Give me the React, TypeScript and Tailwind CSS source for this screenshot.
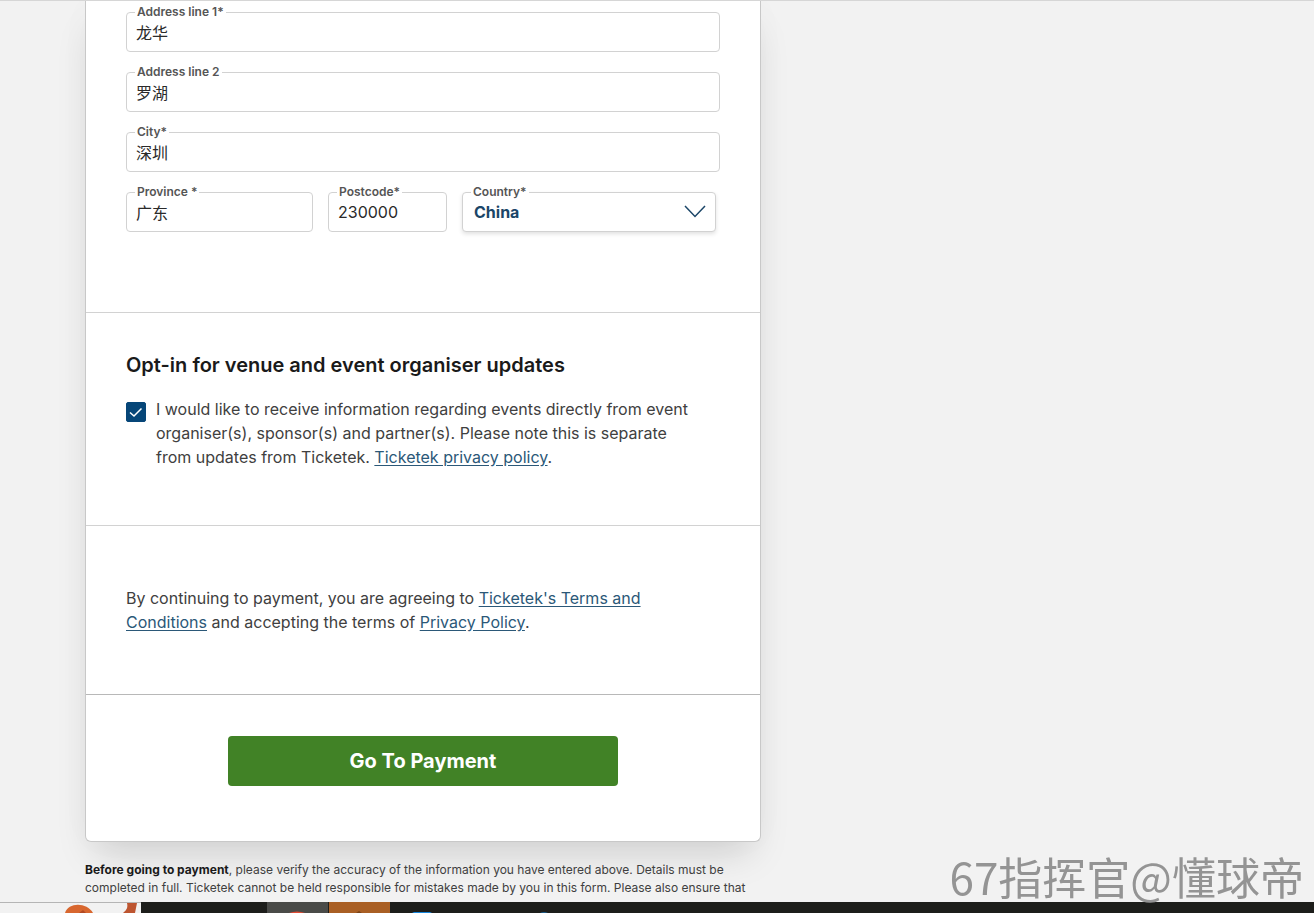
import { useState } from "react";

type FieldProps = {
  id: string;
  label: string;
  value: string;
  onChange: (value: string) => void;
};

const labelClass =
  "absolute -top-2 left-[9px] bg-white px-[2px] text-xs leading-4 font-semibold text-[#555555]";

const Field = ({ id, label, value, onChange }: FieldProps) => (
  <div className="relative">
    <label htmlFor={id} className={labelClass}>
      {label}
    </label>
    <input
      id={id}
      type="text"
      value={value}
      onChange={(e) => onChange(e.target.value)}
      className="block h-10 w-full rounded border border-[#d2d2d2] px-[9px] text-base text-[#2a2a2a] focus:outline-none"
    />
  </div>
);

const Taskbar = () => (
  <footer className="flex h-[11px] shrink-0 overflow-hidden bg-[#1d1e1b]">
    <div className="w-[141px] border-t border-[#b5b5b5] bg-[#f2f2f2]">
      <svg width="141" height="10" viewBox="0 0 141 10" aria-hidden="true">
        <path d="M65 10C68 -1 87 -1 93 10Z" fill="#d8672f" />
        <path d="M79 10l4-3 3 3Z" fill="#b34a22" />
        <path d="M127 0H137L135 10H123C127 7 128 4 127 0Z" fill="#bd5530" />
      </svg>
    </div>
    <div className="w-[126px]" />
    <div className="mr-px w-[61px] bg-[#4a4b48]">
      <svg width="61" height="11" viewBox="0 0 61 11" aria-hidden="true">
        <path d="M22 11Q30 8 38 11Z" fill="#e24b34" />
      </svg>
    </div>
    <div className="w-[61px] bg-[#a95f24]">
      <svg width="61" height="11" viewBox="0 0 61 11" aria-hidden="true">
        <path d="M27 11l3-2 3 2Z" fill="#7a4317" />
      </svg>
    </div>
    <svg width="170" height="11" viewBox="0 0 170 11" aria-hidden="true">
      <path d="M22 11l2-1H40l2 1Z" fill="#1686dc" />
      <path d="M150 11q4-2 8 0Z" fill="#1c5f8e" />
    </svg>
  </footer>
);

const App = () => {
  const [address1, setAddress1] = useState("龙华");
  const [address2, setAddress2] = useState("罗湖");
  const [city, setCity] = useState("深圳");
  const [province, setProvince] = useState("广东");
  const [postcode, setPostcode] = useState("230000");
  const [country, setCountry] = useState("China");
  const [optIn, setOptIn] = useState(true);

  const linkClass = "text-[#2b5878] underline underline-offset-2";

  return (
    <div className="flex h-screen flex-col bg-[#f2f2f2] font-['Inter','Noto_Sans_CJK_SC',sans-serif] text-[#404040]">
      <main className="min-h-0 flex-1 overflow-hidden border-t border-[#d6d6d6] pl-[85px]">
        <div className="max-w-[676px]">
          <form
            onSubmit={(e) => e.preventDefault()}
            className="rounded-b-md border border-t-0 border-[#c8c8c8] bg-white shadow-[0_20px_36px_-10px_rgba(0,0,0,0.15),0_0_40px_rgba(0,0,0,0.02)]"
          >
            <section className="flex flex-col gap-5 border-b border-[#d2d2d2] px-10 pt-[11px] pb-20">
              <Field id="address1" label="Address line 1*" value={address1} onChange={setAddress1} />
              <Field id="address2" label="Address line 2" value={address2} onChange={setAddress2} />
              <Field id="city" label="City*" value={city} onChange={setCity} />
              <div className="grid grid-cols-[187fr_119fr_254fr] gap-[15px] pr-1">
                <Field id="province" label="Province *" value={province} onChange={setProvince} />
                <Field id="postcode" label="Postcode*" value={postcode} onChange={setPostcode} />
                <div className="relative">
                  <label htmlFor="country" className={labelClass}>
                    Country*
                  </label>
                  <select
                    id="country"
                    value={country}
                    onChange={(e) => setCountry(e.target.value)}
                    className="block h-10 w-full appearance-none rounded border border-[#d2d2d2] bg-white px-[11px] text-base font-bold text-[#1b4668] shadow-[0_2px_4px_rgba(0,0,0,0.12)] focus:outline-none"
                  >
                    <option>China</option>
                    <option>Australia</option>
                    <option>New Zealand</option>
                  </select>
                  <svg
                    className="pointer-events-none absolute top-[13px] right-[10px]"
                    width="22"
                    height="13"
                    viewBox="0 0 22 13"
                    fill="none"
                    stroke="#1b4668"
                    strokeWidth="1.5"
                    aria-hidden="true"
                  >
                    <path d="M1 1L11 11.500L21 1" />
                  </svg>
                </div>
              </div>
            </section>

            <section className="border-b border-[#d2d2d2] px-10 pt-10 pb-14">
              <h2 className="text-xl leading-6 font-semibold text-[#1a1a1a]">
                Opt-in for venue and event organiser updates
              </h2>
              <div className="mt-5 flex gap-[10px] pr-5">
                <span className="relative mt-[5px] h-5 w-5 shrink-0">
                  <input
                    id="optin"
                    type="checkbox"
                    checked={optIn}
                    onChange={(e) => setOptIn(e.target.checked)}
                    className="peer block h-5 w-5 appearance-none rounded-xs border border-[#064678] checked:bg-[#064678]"
                  />
                  <svg
                    className="pointer-events-none absolute inset-0 hidden peer-checked:block"
                    width="20"
                    height="20"
                    viewBox="0 0 20 20"
                    fill="none"
                    stroke="white"
                    strokeWidth="1.5"
                    aria-hidden="true"
                  >
                    <path d="M4 10.500L8 14L15.500 6.500" />
                  </svg>
                </span>
                <p className="text-base leading-6">
                  <label htmlFor="optin">
                    I would like to receive information regarding events directly from event
                    organiser(s), sponsor(s) and partner(s). Please note this is separate from
                    updates from Ticketek.
                  </label>{" "}
                  <a href="#privacy" className={linkClass}>
                    Ticketek privacy policy
                  </a>
                  .
                </p>
              </div>
            </section>

            <section className="border-b border-[#b8b8b8] px-10 py-[60px]">
              <p className="text-base leading-6">
                By continuing to payment, you are agreeing to{" "}
                <a href="#terms" className={linkClass}>
                  Ticketek's Terms and Conditions
                </a>{" "}
                and accepting the terms of{" "}
                <a href="#privacy" className={linkClass}>
                  Privacy Policy
                </a>
                .
              </p>
            </section>

            <div className="flex justify-center px-10 pt-[41px] pb-[55px]">
              <button
                type="submit"
                className="h-[50px] w-[390px] rounded bg-[#418226] text-xl font-bold text-white"
              >
                Go To Payment
              </button>
            </div>
          </form>

          <p className="mt-[19px] text-xs leading-[18px]">
            <strong className="font-bold text-[#1a1a1a]">Before going to payment</strong>, please
            verify the accuracy of the information you have entered above. Details must be completed in
            full. Ticketek cannot be held responsible for mistakes made by you in this form. Please also
            ensure that
          </p>
        </div>
      </main>

      <Taskbar />

      {/* watermark */}
      <div className="pointer-events-none fixed right-[10px] bottom-[5px] font-['Noto_Sans_CJK_SC',sans-serif] text-[44px] leading-[64px] text-[#949494]">
        67指挥官@懂球帝
      </div>
    </div>
  );
};

export default App;
